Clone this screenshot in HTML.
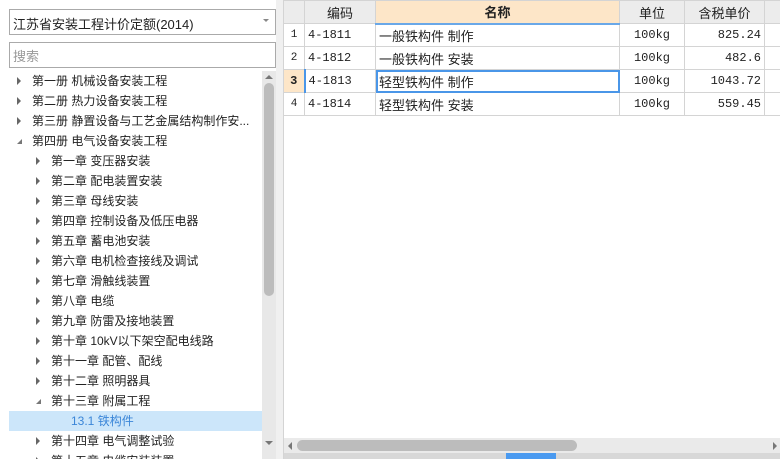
<!DOCTYPE html>
<html><head><meta charset="utf-8"><style>
*{margin:0;padding:0;box-sizing:border-box}
html,body{width:780px;height:459px;overflow:hidden}
body{background:#fff;font-family:"Liberation Sans","Microsoft YaHei","Noto Sans CJK SC",sans-serif;font-size:12px;color:#222;position:relative}
.abs{position:absolute}
.combo{left:9px;top:9px;width:267px;height:26px;border:1px solid #aaa;padding:4px 3px;font-size:13px}
.search{left:9px;top:42px;width:267px;height:26px;border:1px solid #aaa;padding:3px 3px;font-size:13px;color:#999}
.tr{position:absolute;left:9px;width:253px;height:20px;line-height:20px;font-size:12px;white-space:nowrap}
.tri{position:absolute;top:6px;width:0;height:0;border-top:4px solid transparent;border-bottom:4px solid transparent;border-left:4px solid #666}
.open{position:absolute;top:8px;width:0;height:0;border-left:5px solid transparent;border-bottom:5px solid #777}
table{border-collapse:collapse;position:absolute;left:283px;top:0;font-size:12px;table-layout:fixed;width:498px}
td,th{border:1px solid #d4d4d4;height:23px;padding:0 3px;white-space:nowrap;overflow:hidden;font-family:"Liberation Mono","Noto Sans CJK SC",monospace}
th{background:#ececec;font-weight:normal;font-family:"Liberation Sans","Noto Sans CJK SC",sans-serif;font-size:13px}
td.n{font-family:"Liberation Sans","Noto Sans CJK SC",sans-serif;font-size:13px}
</style></head><body>
<div class="abs combo">江苏省安装工程计价定额(2014)<span style="position:absolute;right:6px;top:9px;border-left:3px solid transparent;border-right:3px solid transparent;border-top:3px solid #888"></span></div>
<div class="abs search">搜索</div>
<div class="abs" style="left:262px;top:71px;width:14px;height:388px;background:#e8e8e8"></div>
<div class="abs" style="left:265px;top:75px;border-left:4px solid transparent;border-right:4px solid transparent;border-bottom:4px solid #777"></div>
<div class="abs" style="left:264px;top:83px;width:10px;height:213px;background:#bcbcbc;border-radius:5px"></div>
<div class="abs" style="left:265px;top:441px;border-left:4px solid transparent;border-right:4px solid transparent;border-top:4px solid #777"></div>
<div class="abs" style="left:276px;top:0;width:7px;height:459px;background:#f0f0f0"></div>

<div class="tr" style="top:71px"><span class="tri" style="left:8px"></span><span style="position:absolute;left:23px">第一册 机械设备安装工程</span></div>
<div class="tr" style="top:91px"><span class="tri" style="left:8px"></span><span style="position:absolute;left:23px">第二册 热力设备安装工程</span></div>
<div class="tr" style="top:111px"><span class="tri" style="left:8px"></span><span style="position:absolute;left:23px">第三册 静置设备与工艺金属结构制作安...</span></div>
<div class="tr" style="top:131px"><span class="open" style="left:8px"></span><span style="position:absolute;left:23px">第四册 电气设备安装工程</span></div>
<div class="tr" style="top:151px"><span class="tri" style="left:27px"></span><span style="position:absolute;left:42px">第一章 变压器安装</span></div>
<div class="tr" style="top:171px"><span class="tri" style="left:27px"></span><span style="position:absolute;left:42px">第二章 配电装置安装</span></div>
<div class="tr" style="top:191px"><span class="tri" style="left:27px"></span><span style="position:absolute;left:42px">第三章 母线安装</span></div>
<div class="tr" style="top:211px"><span class="tri" style="left:27px"></span><span style="position:absolute;left:42px">第四章 控制设备及低压电器</span></div>
<div class="tr" style="top:231px"><span class="tri" style="left:27px"></span><span style="position:absolute;left:42px">第五章 蓄电池安装</span></div>
<div class="tr" style="top:251px"><span class="tri" style="left:27px"></span><span style="position:absolute;left:42px">第六章 电机检查接线及调试</span></div>
<div class="tr" style="top:271px"><span class="tri" style="left:27px"></span><span style="position:absolute;left:42px">第七章 滑触线装置</span></div>
<div class="tr" style="top:291px"><span class="tri" style="left:27px"></span><span style="position:absolute;left:42px">第八章 电缆</span></div>
<div class="tr" style="top:311px"><span class="tri" style="left:27px"></span><span style="position:absolute;left:42px">第九章 防雷及接地装置</span></div>
<div class="tr" style="top:331px"><span class="tri" style="left:27px"></span><span style="position:absolute;left:42px">第十章 10kV以下架空配电线路</span></div>
<div class="tr" style="top:351px"><span class="tri" style="left:27px"></span><span style="position:absolute;left:42px">第十一章 配管、配线</span></div>
<div class="tr" style="top:371px"><span class="tri" style="left:27px"></span><span style="position:absolute;left:42px">第十二章 照明器具</span></div>
<div class="tr" style="top:391px"><span class="open" style="left:27px"></span><span style="position:absolute;left:42px">第十三章 附属工程</span></div>
<div class="tr" style="top:411px;background:#cce6fa;color:#3b86d8"><span style="position:absolute;left:62px">13.1 铁构件</span></div>
<div class="tr" style="top:431px"><span class="tri" style="left:27px"></span><span style="position:absolute;left:42px">第十四章 电气调整试验</span></div>
<div class="tr" style="top:451px"><span class="tri" style="left:27px"></span><span style="position:absolute;left:42px">第十五章 电缆安装装置</span></div>

<table>
<colgroup><col style="width:21px"><col style="width:71px"><col style="width:244px"><col style="width:65px"><col style="width:80px"><col style="width:17px"></colgroup>
<tr><th></th><th>编码</th><th style="background:#fde6c8;font-weight:bold;border-bottom:2px solid #6aa8e8">名称</th><th>单位</th><th>含税单价</th><th></th></tr>
<tr><td style="text-align:center;font-size:11px">1</td><td>4-1811</td><td class="n">一般铁构件 制作</td><td style="text-align:center">100kg</td><td style="text-align:right">825.24</td><td></td></tr>
<tr><td style="text-align:center;font-size:11px">2</td><td>4-1812</td><td class="n">一般铁构件 安装</td><td style="text-align:center">100kg</td><td style="text-align:right">482.6</td><td></td></tr>
<tr><td style="text-align:center;background:#fde6c8;font-weight:bold;border-right:2px solid #4a96e8">3</td><td>4-1813</td><td class="n" style="outline:2px solid #4a96e8;outline-offset:-2px">轻型铁构件 制作</td><td style="text-align:center">100kg</td><td style="text-align:right">1043.72</td><td></td></tr>
<tr><td style="text-align:center;font-size:11px">4</td><td>4-1814</td><td class="n">轻型铁构件 安装</td><td style="text-align:center">100kg</td><td style="text-align:right">559.45</td><td></td></tr>
</table>
<div class="abs" style="left:283px;top:0;width:1px;height:459px;background:#d4d4d4"></div>
<div class="abs" style="left:284px;top:438px;width:496px;height:15px;background:#eaeaea"></div>
<div class="abs" style="left:288px;top:442px;border-top:4px solid transparent;border-bottom:4px solid transparent;border-right:4px solid #777"></div>
<div class="abs" style="left:297px;top:440px;width:280px;height:11px;background:#bcbcbc;border-radius:6px"></div>
<div class="abs" style="left:773px;top:442px;border-top:4px solid transparent;border-bottom:4px solid transparent;border-left:4px solid #777"></div>
<div class="abs" style="left:284px;top:453px;width:496px;height:6px;background:#d8d8d8"></div>
<div class="abs" style="left:506px;top:453px;width:50px;height:6px;background:#4a9af0"></div>
</body></html>
